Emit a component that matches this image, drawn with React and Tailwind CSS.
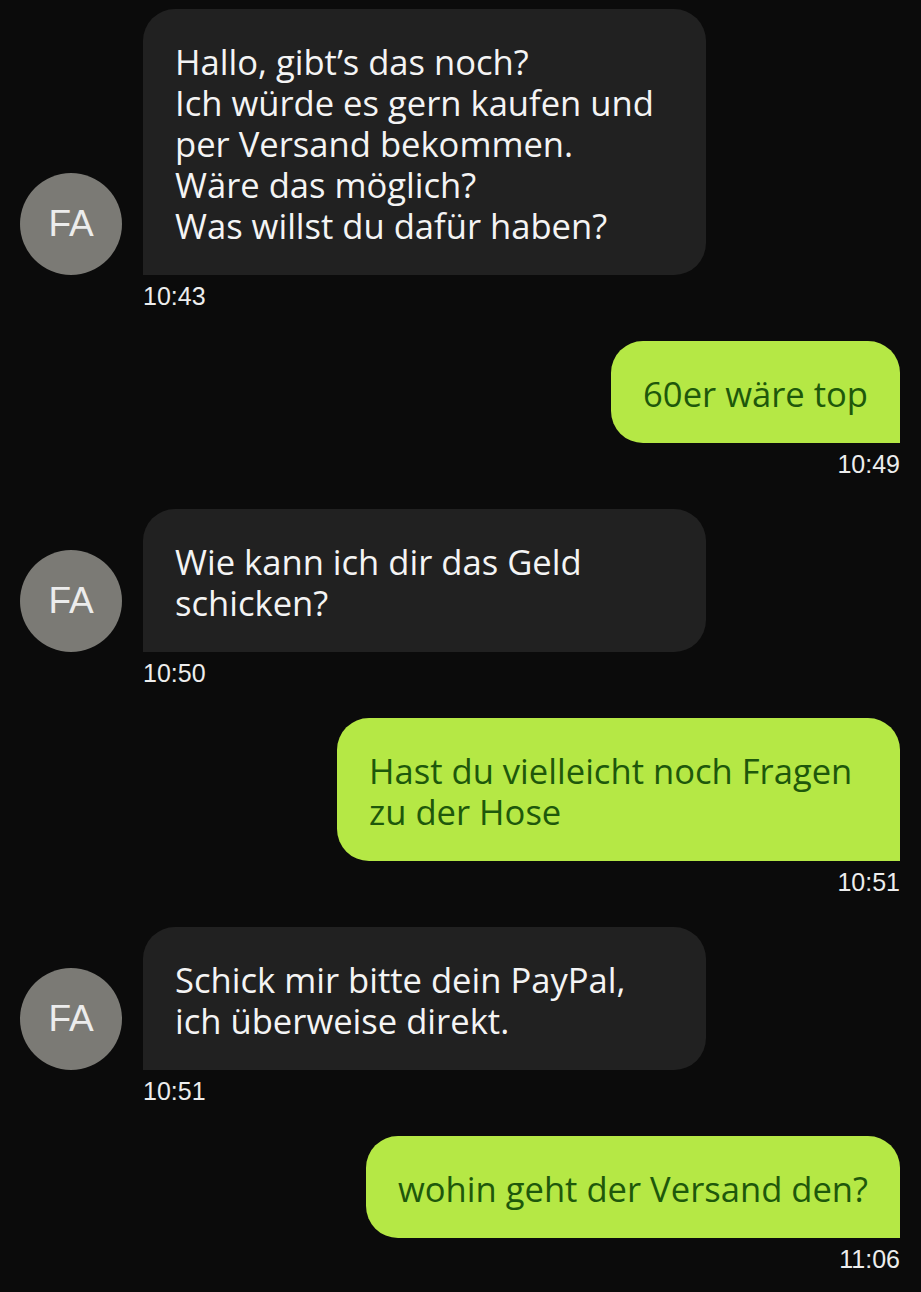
import React from 'react';

const messages = [
  { from: 'them', time: '10:43', lines: ['Hallo, gibt’s das noch?', 'Ich würde es gern kaufen und', 'per Versand bekommen.', 'Wäre das möglich?', 'Was willst du dafür haben?'] },
  { from: 'me', time: '10:49', text: '60er wäre top' },
  { from: 'them', time: '10:50', text: 'Wie kann ich dir das Geld schicken?' },
  { from: 'me', time: '10:51', text: 'Hast du vielleicht noch Fragen zu der Hose' },
  { from: 'them', time: '10:51', lines: ['Schick mir bitte dein PayPal,', 'ich überweise direkt.'] },
  { from: 'me', time: '11:06', text: 'wohin geht der Versand den?' },
];

const bubbleText = "font-['Open_Sans',sans-serif] text-[34.6px] leading-[41px]";
const timeText = "mt-[7px] font-['Liberation_Sans',Arial,sans-serif] text-[25px] leading-[28px] text-[#ededed]";

const Avatar = () => (
  <div className="w-[102px] h-[102px] shrink-0 rounded-full bg-[#7b7a75] flex items-center justify-center">
    <span className="font-['Liberation_Sans',Arial,sans-serif] text-[37px] text-[#ececec]">FA</span>
  </div>
);

const Incoming = ({ msg }) => (
  <div className="flex flex-col">
    <div className="flex items-end gap-[21px]">
      <Avatar />
      <div className={`w-[563px] rounded-[32px] rounded-bl-none bg-[#212121] px-8 pt-[32px] pb-[29px] text-[#f4f4f4] ${bubbleText}`}>
        {msg.lines
          ? msg.lines.map((l, i) => <div key={i}>{l}</div>)
          : msg.text}
      </div>
    </div>
    <div className={`pl-[123px] ${timeText}`}>{msg.time}</div>
  </div>
);

const Outgoing = ({ msg }) => (
  <div className="flex flex-col items-end">
    <div className={`max-w-[563px] rounded-[32px] rounded-br-none bg-[#b5e845] px-8 pt-[32px] pb-[29px] text-[#1e580b] ${bubbleText}`}>
      {msg.text}
    </div>
    <div className={timeText}>{msg.time}</div>
  </div>
);

export default function App() {
  return (
    <div className="min-h-[1292px] w-[921px] bg-[#0b0b0b] pt-[9px] pl-[20px] pr-[21px] flex flex-col gap-[31px]">
      {messages.map((m, i) =>
        m.from === 'them' ? <Incoming key={i} msg={m} /> : <Outgoing key={i} msg={m} />
      )}
    </div>
  );
}
